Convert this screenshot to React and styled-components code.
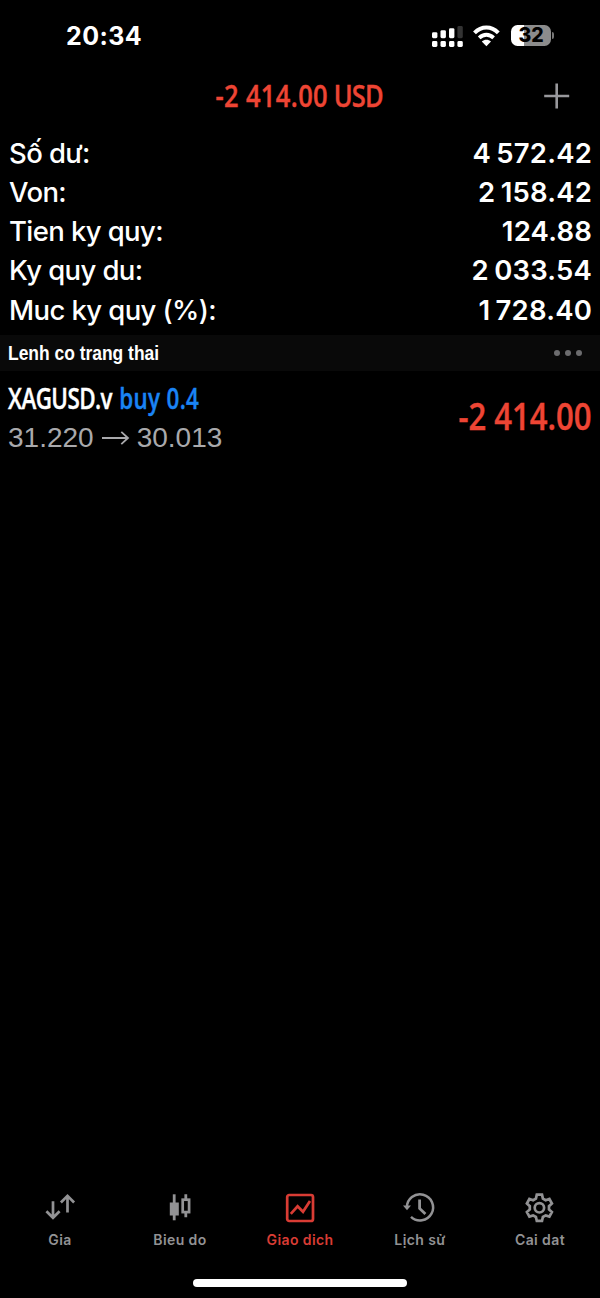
import React from "react";
import styled, { createGlobalStyle } from "styled-components";

const summary = [
    { name: "Số dư:", value: "4 572.42" },
    { name: "Von:", value: "2 158.42" },
    { name: "Tien ky quy:", value: "124.88" },
    { name: "Ky quy du:", value: "2 033.54" },
    { name: "Muc ky quy (%):", value: "1 728.40" },
];

const QuotesIcon = () => (
    <svg width="30" height="30" viewBox="0 0 30 30" fill="none" stroke="currentColor" strokeWidth="2.7">
        <path d="M8 8.2V24.5M1.4 18.2L8 24.8L14.6 18.2" />
        <path d="M22.5 19.5V2.5M15.9 9.5L22.5 2.9L29.1 9.5" />
    </svg>
);

const CandlesIcon = () => (
    <svg width="30" height="30" viewBox="0 0 30 30" fill="none" stroke="currentColor">
        <path d="M9.2 1.3V27.3" strokeWidth="2.8" />
        <rect x="4.8" y="9.5" width="9" height="13" fill="currentColor" stroke="none" />
        <path d="M20.8 1.3V6M20.8 19.5V24.3" strokeWidth="2.8" />
        <rect x="17.7" y="6.7" width="6.4" height="12.4" strokeWidth="2.7" />
    </svg>
);

const TradeIcon = () => (
    <svg width="30" height="30" viewBox="0 0 30 30" fill="none" stroke="currentColor" strokeWidth="2.7">
        <rect x="2.2" y="2" width="25.8" height="26" rx="2" />
        <path d="M5.8 20.8L12.6 13.3L18 18.8L25 8" />
    </svg>
);

const HistoryIcon = () => (
    <svg width="30" height="30" viewBox="0 0 30 30" fill="none" stroke="currentColor" strokeWidth="2.5">
        <path d="M1.9 14.5A13.1 13.1 0 1 1 6 23.9" />
        <path d="M-2 12.6H6L2 17.2Z" fill="currentColor" stroke="none" />
        <path d="M14.6 6.6V15.4L20.4 21" strokeWidth="2.8" />
    </svg>
);

const GearIcon = () => (
    <svg width="30" height="30" viewBox="0 0 30 30" fill="none" stroke="currentColor" strokeWidth="2.7">
        <path d="M11.8 1.7H17L17.9 5.6L20.7 7.2L24.4 6L26.9 10.5L24 13.2V16.4L26.9 19L24.4 23.6L20.7 22.4L17.9 24L17 27.9H11.8L10.9 24L8.1 22.4L4.4 23.6L1.9 19L4.8 16.4V13.2L1.9 10.5L4.4 6L8.1 7.2L10.9 5.6Z" />
        <circle cx="14.4" cy="14.8" r="4.7" />
    </svg>
);

const tabs = [
    { label: "Gia", icon: <QuotesIcon /> },
    { label: "Bieu do", icon: <CandlesIcon /> },
    { label: "Giao dich", icon: <TradeIcon />, on: true },
    { label: "Lịch sử", icon: <HistoryIcon /> },
    { label: "Cai dat", icon: <GearIcon /> },
];

const App = () => {
    return (
        <>
            <GlobalStyle />
            <Screen>
                <StatusBar>
                    <Time>20:34</Time>
                    <StatusIcons>
                        <svg width="32" height="24" viewBox="0 0 32 24" fill="#fff">
                            <rect x="0" y="8.2" width="5.4" height="6" rx="1.4" />
                            <rect x="8.5" y="6.2" width="5.4" height="8" rx="1.4" />
                            <rect x="17" y="4.2" width="5.4" height="10" rx="1.4" />
                            <rect x="25.4" y="2" width="5.4" height="12.2" rx="1.4" fill="#333" />
                            <rect x="0" y="17" width="5.4" height="6" rx="1.4" />
                            <rect x="8.5" y="17" width="5.4" height="6" rx="1.4" />
                            <rect x="17" y="17" width="5.4" height="6" rx="1.4" />
                            <rect x="25.4" y="17" width="5.4" height="6" rx="1.4" />
                        </svg>
                        <svg width="28" height="24" viewBox="0 0 28 24" fill="none" stroke="#fff" strokeWidth="4">
                            <path d="M1.5 8.8C8.5 1.7 18.3 1.7 25.3 8.8" />
                            <path d="M6.2 13.8C10.5 9.7 16.3 9.7 20.6 13.8" strokeWidth="3.8" />
                            <path d="M8.8 17.6C11.5 15 15.3 15 18 17.6L13.4 22.3Z" fill="#fff" stroke="none" />
                        </svg>
                        <BatteryBox>
                            <Battery>32</Battery>
                            <BatteryTip />
                        </BatteryBox>
                    </StatusIcons>
                </StatusBar>

                <Header>
                    <Total>-2 414.00<Currency> USD</Currency></Total>
                    <AddButton>
                        <svg width="26" height="26" viewBox="0 0 26 26" stroke="#98989c" strokeWidth="2.6">
                            <path d="M12.7 0.5V25.5M0.2 13H25.2" />
                        </svg>
                    </AddButton>
                </Header>

                <Summary>
                    {summary.map((item) => (
                        <SummaryRow key={item.name}>
                            <Name>{item.name}</Name>
                            <Value>{item.value}</Value>
                        </SummaryRow>
                    ))}
                </Summary>

                <Section>
                    <SectionTitle>Lenh co trang thai</SectionTitle>
                    <svg width="30" height="8" viewBox="0 0 30 8" fill="#6c6c6e">
                        <circle cx="4" cy="4" r="3" />
                        <circle cx="15" cy="4" r="3" />
                        <circle cx="26" cy="4" r="3" />
                    </svg>
                </Section>

                <Position>
                    <div>
                        <Symbol>XAGUSD.v <Side>buy 0.4</Side></Symbol>
                        <Prices>
                            31.220
                            <svg width="27" height="16" viewBox="0 0 27 16" fill="none" stroke="currentColor" strokeWidth="1.8">
                                <path d="M0 8H26M19.3 1.8L26 8L19.3 14.2" />
                            </svg>
                            30.013
                        </Prices>
                    </div>
                    <Profit>-2 414.00</Profit>
                </Position>

                <TabBar>
                    {tabs.map((tab) => (
                        <Tab key={tab.label} $on={tab.on}>
                            {tab.icon}
                            <span>{tab.label}</span>
                        </Tab>
                    ))}
                </TabBar>
                <HomeArea>
                    <HomeLine />
                </HomeArea>
            </Screen>
        </>
    );
};

const GlobalStyle = createGlobalStyle`
body {
    margin: 0;
    background: #000;
}
* {
    box-sizing: border-box;
}
svg {
    display: block;
    overflow: visible;
    flex: none;
}
`;

const Screen = styled.div`
width: 600px;
height: 1298px;
background: #000;
color: #fff;
display: flex;
flex-direction: column;
overflow: hidden;
font-family: Inter, "Noto Sans", sans-serif;
`;

const StatusBar = styled.div`
height: 72px;
padding: 0 46px 0 66px;
display: flex;
align-items: center;
justify-content: space-between;
`;

const Time = styled.div`
font-size: 25px;
font-weight: 700;
line-height: 30px;
letter-spacing: 0.4px;
`;

const StatusIcons = styled.div`
display: flex;
align-items: center;
gap: 9px;
`;

const BatteryBox = styled.div`
display: flex;
align-items: center;
gap: 1px;
margin: 0 0 1px 1px;
`;

const Battery = styled.div`
width: 40px;
height: 21px;
border-radius: 6.5px;
background: linear-gradient(90deg, #fff 32%, #8c8c8c 32%);
color: #000;
font-size: 19.5px;
font-weight: 800;
line-height: 21px;
text-align: center;
`;

const BatteryTip = styled.div`
width: 2px;
height: 7px;
border-radius: 0 2px 2px 0;
background: #777;
`;

const Header = styled.div`
height: 48px;
padding: 0 30px;
display: grid;
grid-template-columns: 26px 1fr 26px;
align-items: center;
`;

const Narrow = styled.div`
font-family: "Open Sans", sans-serif;
font-weight: 600;
white-space: nowrap;
-webkit-text-stroke: 0.4px currentColor;
`;

const Total = styled(Narrow)`
grid-column: 2;
justify-self: center;
margin: 0 1px 2px 0;
font-size: 31px;
line-height: 40px;
letter-spacing: 0.5px;
color: #ee4534;
transform: scaleX(0.82);
`;

const Currency = styled.span`
letter-spacing: -1px;
`;

const AddButton = styled.div`
grid-column: 3;
`;

const Summary = styled.div`
padding: 13.7px 8px 0 9px;
height: 215px;
`;

const SummaryRow = styled.div`
height: 39.2px;
display: flex;
align-items: center;
justify-content: space-between;
font-size: 27.5px;
line-height: 39px;
`;

const Name = styled.span`
font-weight: 550;
letter-spacing: -0.6px;
`;

const Value = styled.span`
font-weight: 640;
letter-spacing: 0.2px;
word-spacing: -1.8px;
`;

const Section = styled.div`
height: 36px;
padding: 0 17px 0 8px;
background: #090909;
display: flex;
align-items: center;
justify-content: space-between;
`;

const SectionTitle = styled.div`
font-family: "Liberation Sans", sans-serif;
font-weight: 700;
font-size: 21px;
white-space: nowrap;
transform: scaleX(0.83);
transform-origin: left;
`;

const Position = styled.div`
height: 92px;
padding: 7px 8px 0 8px;
display: flex;
justify-content: space-between;
`;

const Symbol = styled(Narrow)`
font-size: 28px;
line-height: 40px;
letter-spacing: -0.7px;
transform: scaleX(0.8);
transform-origin: left;
`;

const Side = styled.span`
margin-left: 2.5px;
color: #1a84f5;
letter-spacing: 0.4px;
`;

const Prices = styled.div`
display: flex;
align-items: center;
gap: 8px;
font-family: "Liberation Sans", sans-serif;
font-size: 28px;
line-height: 40px;
color: #a9a9ac;
`;

const Profit = styled(Narrow)`
font-size: 37px;
line-height: 76px;
color: #ee4534;
transform: scaleX(0.84);
transform-origin: right;
`;

const TabBar = styled.div`
margin-top: auto;
height: 76px;
display: grid;
grid-template-columns: repeat(5, 1fr);
`;

const Tab = styled.div`
display: flex;
flex-direction: column;
align-items: center;
gap: 7px;
color: ${(props) => (props.$on ? "#d93c34" : "#929294")};
font-size: 14px;
font-weight: 600;
line-height: 20px;
letter-spacing: 0.4px;
`;

const HomeArea = styled.div`
height: 29px;
padding-top: 10px;
display: flex;
justify-content: center;
`;

const HomeLine = styled.div`
width: 214px;
height: 8px;
border-radius: 4px;
background: #fff;
`;

export default App;
